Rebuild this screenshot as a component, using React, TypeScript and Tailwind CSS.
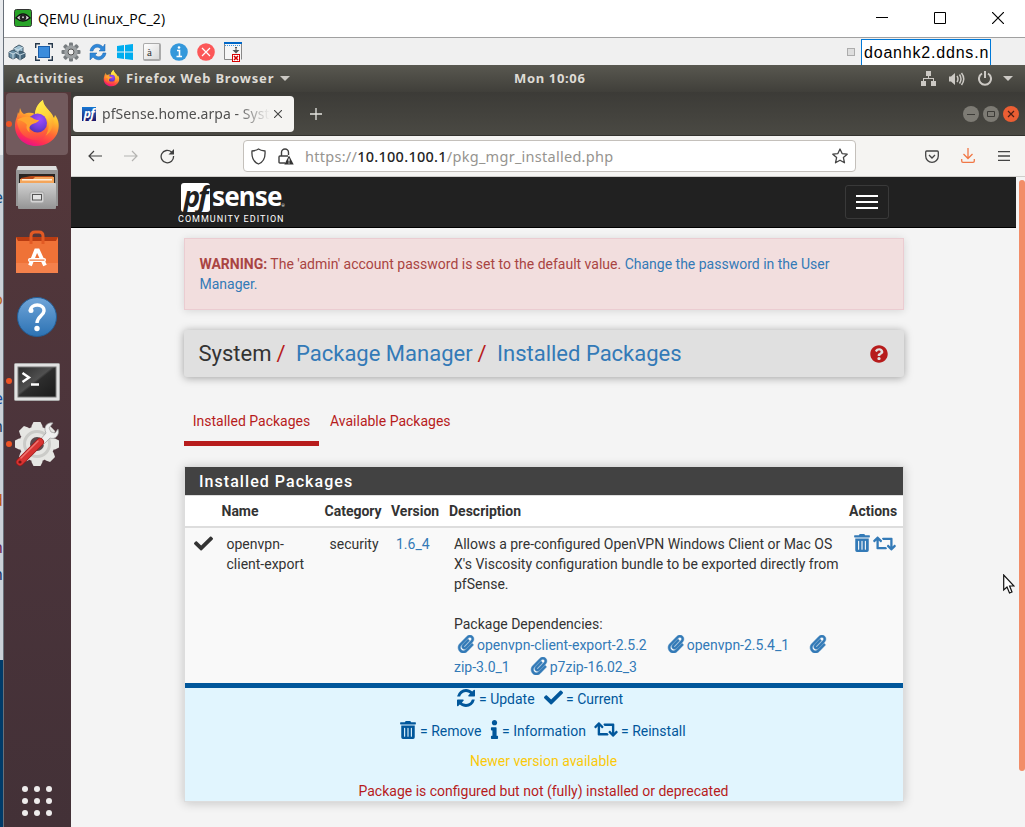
import type { ReactNode } from "react";
import { FaCheck, FaInfo, FaPaperclip, FaQuestionCircle, FaRetweet, FaTrashAlt } from "react-icons/fa";

function Firefox({ className }: { className: string }) {
  return (
    <svg viewBox="0 0 46 48" className={className}>
      <defs>
        <linearGradient id="ffBody" x1="0.75" y1="0" x2="0.35" y2="1">
          <stop offset="0" stopColor="#fff04a" />
          <stop offset="0.35" stopColor="#ffbd2e" />
          <stop offset="0.62" stopColor="#ff6a35" />
          <stop offset="0.85" stopColor="#ff2f52" />
          <stop offset="1" stopColor="#e8118a" />
        </linearGradient>
        <radialGradient id="ffGlobe" cx="0.6" cy="0.3" r="0.8">
          <stop offset="0" stopColor="#a04bff" />
          <stop offset="0.6" stopColor="#6f3ed8" />
          <stop offset="1" stopColor="#4a2fa8" />
        </radialGradient>
        <linearGradient id="ffFlame" x1="0" y1="0" x2="0.4" y2="1">
          <stop offset="0" stopColor="#fff44f" />
          <stop offset="0.6" stopColor="#ffd23a" />
          <stop offset="1" stopColor="#ff9d2f" />
        </linearGradient>
        <linearGradient id="ffCheek" x1="0" y1="0" x2="0" y2="1">
          <stop offset="0" stopColor="#ff9a2c" />
          <stop offset="0.6" stopColor="#ff6535" />
          <stop offset="1" stopColor="#fb3c50" />
        </linearGradient>
      </defs>
      <path d="M6 8C7 11 8 13 10 14C13 13 17 12 21 14C21 9 24 3 29 0C29 5 33 8 37 13C39 15 39 17 40 18L41 15C45 20 46 27 43 34C39 42 31 46 22 46C10 46 1 37 1 26C1 20 3 18 4 12L5 14Z" fill="url(#ffBody)" />
      <path d="M21 14C22 7 25 3 29 0C29 6 36 10 39 17C41 24 37 33 31 36C36 30 36 22 32 18C29 14 25 14 21 14Z" fill="url(#ffFlame)" />
      <path d="M3 21C8 16 16 15 20 19L33 25C35 34 30 40 23 40C11 40 4 32 3 21Z" fill="url(#ffCheek)" />
      <circle cx="23.500" cy="23" r="9.500" fill="url(#ffGlobe)" />
      <path d="M3 20C9 16 17 16 20 19C22 20 24 20 25 20C24 23 20 23 17 25C15 27 14 31 17 33C12 31 12 26 13 25C11 22 7 20 3 20Z" fill="#ffa42f" />
    </svg>
  );
}

function FilesIcon() {
  return (
    <svg viewBox="0 0 44 46" className="h-[46px] w-[44px]">
      <defs>
        <linearGradient id="cab" x1="0" y1="0" x2="0" y2="1">
          <stop offset="0" stopColor="#d0d0d0" />
          <stop offset="1" stopColor="#949494" />
        </linearGradient>
      </defs>
      <path d="M3 1H41L43 5V41H1V5Z" fill="#969696" />
      <path d="M3 1H41L42 5H2Z" fill="#dedede" />
      <rect x="4" y="9" width="36" height="10" fill="#292522" />
      <path d="M6 13L16 11H38V19H6Z" fill="#b94b19" />
      <path d="M5 14H18L20 12H39V19H5Z" fill="#f4a55a" />
      <rect x="7" y="14" width="30" height="1.5" fill="#fff2df" />
      <rect x="3" y="18" width="38" height="26" rx="1" fill="url(#cab)" />
      <rect x="15" y="27" width="14" height="11" rx="2" fill="#d4d4d4" stroke="#a5a5a5" />
      <rect x="17.5" y="29.5" width="9" height="5.5" fill="#e4e4e4" stroke="#555" />
    </svg>
  );
}

function SoftwareIcon() {
  return (
    <svg viewBox="0 0 44 44" className="h-[44px] w-[44px]">
      <path d="M1 7H43V43H1Z" fill="#ef7237" />
      <path d="M1 33H43V43H1Z" fill="#f4814b" />
      <path d="M1 7H43L41 11H3Z" fill="#b93c12" />
      <path d="M16 14V6Q16 2 20 2H24Q28 2 28 6V14" fill="none" stroke="#e25a24" strokeWidth="3" />
      <path d="M15 35.500L21 20.500H23L30 35.500" fill="none" stroke="#fff" strokeWidth="3.800" />
      <rect x="13" y="28" width="18" height="4" rx="2" fill="#fff" />
      <rect x="14.500" y="29.500" width="15" height="1.200" fill="#ef7237" />
    </svg>
  );
}

function HelpIcon() {
  return (
    <svg viewBox="0 0 42 42" className="h-[42px] w-[42px]">
      <defs>
        <linearGradient id="hp" x1="0" y1="0" x2="0" y2="1">
          <stop offset="0" stopColor="#70a5d9" />
          <stop offset="1" stopColor="#2c72b3" />
        </linearGradient>
      </defs>
      <circle cx="21" cy="21" r="19.5" fill="url(#hp)" stroke="#245e96" />
      <path d="M14.500 15C14 7 28.500 7 28 15C27.500 20 21.500 20 21 27" fill="none" stroke="#fff" strokeWidth="3.400" />
      <circle cx="15" cy="14.500" r="2.500" fill="#fff" />
      <circle cx="21" cy="32.500" r="2.700" fill="#fff" />
    </svg>
  );
}

function TerminalIcon() {
  return (
    <svg viewBox="0 0 46 38" className="mt-[1px] h-[38px] w-[46px]">
      <defs>
        <linearGradient id="tm" x1="0" y1="0" x2="1" y2="1">
          <stop offset="0" stopColor="#2b2b2b" />
          <stop offset="0.45" stopColor="#505050" />
          <stop offset="0.5" stopColor="#2d2d2d" />
          <stop offset="1" stopColor="#1b1b1b" />
        </linearGradient>
      </defs>
      <rect x="0.500" y="0.500" width="45" height="37" rx="1" fill="#e2e2e2" stroke="#aaa" />
      <rect x="4" y="4" width="38" height="30" fill="url(#tm)" stroke="#777" />
      <path d="M8.500 10L15 14.500L8.500 19M17 21.500H25" fill="none" stroke="#fff" strokeWidth="2.400" />
    </svg>
  );
}

const dockGearTeeth = [0, 45, 90, 135];

function ToolsIcon() {
  return (
    <svg viewBox="0 0 44 46" className="h-[46px] w-[44px]">
      {dockGearTeeth.map((a) => (
        <path key={a} d="M16.500 5L18.500 1H25.500L27.500 5V41L25.500 45H18.500L16.500 41Z" fill="#e6e6e3" transform={`rotate(${a} 22 23)`} />
      ))}
      <circle cx="22" cy="23" r="17.500" fill="#e6e6e3" />
      <circle cx="22" cy="23" r="12.500" fill="none" stroke="#cbcbc8" strokeWidth="3" />
      <circle cx="22" cy="23" r="7" fill="#5c4a4e" />
      <path d="M24 20L31 12C28 6 32 1 38 2L34 7L36 11L40 12L43 8C45 14 40 19 35 17L28 24Z" fill="#efefef" stroke="#999" strokeWidth="0.700" />
      <path d="M25 21L5 41" stroke="#9f1b1b" strokeWidth="8" strokeLinecap="round" />
      <path d="M25 21L5 41" stroke="#d83432" strokeWidth="6.500" strokeLinecap="round" />
      <path d="M23 20L6 37" stroke="#ef7771" strokeWidth="1.500" strokeLinecap="round" />
      <circle cx="5" cy="41" r="1.600" fill="#6d1717" />
    </svg>
  );
}

function DockItem({ children, running, className }: { children: ReactNode; running?: boolean; className: string }) {
  return (
    <div className={`flex w-full items-center ${className}`}>
      <div className="flex w-[10px] shrink-0 justify-center">
        {running && <span className="-ml-[1px] size-[6px] rounded-full bg-[#ef5425]" />}
      </div>
      <div className="flex w-[46px] shrink-0 items-center justify-center">{children}</div>
    </div>
  );
}

function Dock() {
  return (
    <aside className="flex w-[67px] shrink-0 flex-col bg-linear-to-b from-[#55383a] via-[#4b343b] to-[#433137]">
      <div className="mt-[1px] ml-[2px] flex h-[62px] w-[62px] items-center rounded-[4px] bg-[#725a5d]">
        <span className="size-[6px] shrink-0 rounded-full bg-[#ef5425]" />
        <Firefox className="ml-[2px] h-[48px] w-[46px]" />
      </div>
      <DockItem className="mt-[8px] h-[50px]"><FilesIcon /></DockItem>
      <DockItem className="mt-[14px] h-[50px]"><SoftwareIcon /></DockItem>
      <DockItem className="mt-[15px] h-[50px]"><HelpIcon /></DockItem>
      <DockItem className="mt-[14px] h-[50px]" running><TerminalIcon /></DockItem>
      <DockItem className="mt-[13px] h-[50px]" running><ToolsIcon /></DockItem>
      <div className="mt-auto mb-[11px] ml-[18px] grid w-[30px] grid-cols-3 gap-[6px]">
        {Array.from({ length: 9 }, (_, i) => (
          <span key={i} className="size-[6px] rounded-full bg-[#eeecec]" />
        ))}
      </div>
    </aside>
  );
}

function TitleBar() {
  return (
    <div className="flex h-[38px] shrink-0 items-center border-b border-[#a0a0a0] bg-white pl-[10px]">
      <svg viewBox="0 0 18 18" className="-mt-[1px] size-[18px]">
        <rect x="0.500" y="0.500" width="17" height="17" rx="2" fill="#28a428" stroke="#333" />
        <path d="M2 9Q9 1 16 9Q9 15 2 9Z" fill="#ddd" stroke="#111" strokeWidth="1.400" />
        <circle cx="9" cy="8.500" r="3.300" fill="#222" />
        <circle cx="9" cy="8.300" r="1" fill="#ccc" />
      </svg>
      <span className="-mt-[1px] ml-[6px] font-['Open_Sans',sans-serif] text-[14px] tracking-[0.050px] text-black">QEMU (Linux_PC_2)</span>
      <div className="-mt-[2px] mr-[21px] ml-auto flex items-center gap-[46px] text-black">
        <svg viewBox="0 0 12 12" className="size-[12px]"><path d="M0 5.500H12" stroke="currentColor" /></svg>
        <svg viewBox="0 0 12 12" className="size-[12px]"><path d="M0.500 0.500H11.500V11.500H0.500Z" fill="none" stroke="currentColor" /></svg>
        <svg viewBox="0 0 12 12" className="size-[12px]"><path d="M0 0L12 12M12 0L0 12" stroke="currentColor" strokeWidth="1.200" /></svg>
      </div>
    </div>
  );
}

const gearTeeth = [0, 45, 90, 135];

function ViewerToolbar() {
  return (
    <div className="flex h-[27px] shrink-0 items-center bg-[#f0f0f0] pl-[4px]">
      <div className="flex items-center gap-[9px]">
        <svg viewBox="0 0 18 18" className="size-[18px]" stroke="#334b5b" strokeWidth="0.900">
          <path d="M6 5L11 2L15 4V9L10 11L6 9Z" fill="#9fc0d2" />
          <path d="M1 9L5 7L9 9V14L5 16L1 14Z" fill="#6c91a7" />
          <path d="M8 10L12 8L17 10V14L12 17L8 14Z" fill="#45667c" />
          <path d="M6 5L10 7V11M10 7L15 4M1 9L5 11V16M5 11L9 9M8 10L12 12V17M12 12L17 10" fill="none" stroke="#d3e3eb" />
        </svg>
        <svg viewBox="0 0 18 18" className="size-[18px]">
          <rect x="3.500" y="3.500" width="11" height="11" fill="#3b8cdc" stroke="#1b5da8" />
          <path d="M0.700 5V0.700H5M13 0.700H17.300V5M17.300 13V17.300H13M5 17.300H0.700V13" fill="none" stroke="#26384b" strokeWidth="1.400" />
        </svg>
        <svg viewBox="0 0 20 20" className="-mx-[1px] size-[20px]">
          {gearTeeth.map((a) => <rect key={a} x="8" y="0.500" width="4" height="19" rx="1" fill="#777c7f" transform={`rotate(${a} 10 10)`} />)}
          <circle cx="10" cy="10" r="5" fill="#aaa" stroke="#9da1a3" strokeWidth="3.500" />
          <circle cx="10" cy="10" r="3" fill="#f0f0f0" stroke="#555" />
        </svg>
        <svg viewBox="0 0 18 18" className="size-[18px]">
          <path d="M1 8C2 1 10 -1 14 4L16 1V8H10L12 6C9 3 5 4 4 8ZM17 10C16 17 8 19 4 14L1 17V10H8L6 12C9 15 13 14 14 10Z" fill="#2f87d8" stroke="#1a65af" strokeWidth="0.500" />
        </svg>
        <svg viewBox="0 0 16 16" className="mr-[1px] ml-[1px] size-[16px]" fill="#00adef"><path d="M0 2L7 1V7.500H0ZM8 0.900L16 0V7.500H8ZM0 8.500H7V15L0 14ZM8 8.500H16V16L8 15Z" /></svg>
        <div className="flex size-[18px] rounded-[2px] border border-r-2 border-b-2 border-[#aaa] bg-linear-to-br from-white to-[#d9d9d9] pl-[3px] font-['Liberation_Serif',serif] text-[11px] leading-[16px] text-[#333]">à</div>
        <svg viewBox="0 0 18 18" className="size-[18px]"><circle cx="9" cy="9" r="8.800" fill="#3498db" /><path d="M7 7.500H9.500V13.500M6.500 13.500H12" stroke="#fff" strokeWidth="1.600" fill="none" /><circle cx="9" cy="4.500" r="1.300" fill="#fff" /></svg>
        <svg viewBox="0 0 18 18" className="size-[18px]"><circle cx="9" cy="9" r="8.800" fill="#fc5758" /><path d="M5 5L13 13M13 5L5 13" stroke="#fff" strokeWidth="1.200" /></svg>
        <svg viewBox="0 0 18 20" className="h-[20px] w-[18px]">
          <path d="M0.500 1V17.500H8M17.500 1V17.500" fill="#fff" stroke="#888" />
          <rect x="1" y="2" width="16" height="15" fill="#f6f6f6" />
          <path d="M0 1H18" stroke="#0068c9" strokeWidth="2" />
          <path d="M1 3.500H17" stroke="#3b93e0" strokeDasharray="1 1" />
          <path d="M12 5V10" stroke="#555" strokeWidth="2" strokeDasharray="1.500 1" />
          <path d="M8.500 8H15.500L12 11.500Z" fill="#555" />
          <rect x="8.500" y="12.500" width="7" height="7" fill="#fff" stroke="#d60000" />
          <path d="M10 14L14 18M14 14L10 18" stroke="#d60000" strokeWidth="1.600" />
        </svg>
      </div>
      <div className="mr-[34px] ml-auto flex h-full items-center gap-[6px]">
        <span className="size-[8px] border border-[#acacac] bg-[#dedede]" />
        <div className="mt-[1px] h-[26px] w-[130px] overflow-hidden border border-b-0 border-[#0078d7] bg-white pl-[2px] font-['Liberation_Sans',sans-serif] text-[16px] leading-[25px] tracking-[0.800px] whitespace-nowrap text-black">doanhk2.ddns.n</div>
      </div>
    </div>
  );
}

function TopBar() {
  return (
    <div className="flex h-[27px] shrink-0 items-center bg-linear-to-b from-[#595850] to-[#403f3a] pl-[12px] font-['Noto_Sans',sans-serif] text-[13px] font-bold tracking-[0.800px] text-[#dedbd5]">
      <span className="w-[87px]">Activities</span>
      <Firefox className="-mt-[1px] h-[17px] w-[17px]" />
      <span className="ml-[6px] w-[149px] whitespace-nowrap">Firefox Web Browser</span>
      <svg viewBox="0 0 10 5" className="ml-[5px] h-[5px] w-[10px]"><path d="M0 0H10L5 5Z" fill="#ccc9c4" /></svg>
      <span className="ml-[224px] tracking-[0.650px] whitespace-nowrap">Mon 10:06</span>
      <div className="mr-[12px] ml-auto flex items-center gap-[12px]">
        <svg viewBox="0 0 15 15" className="mr-[1px] size-[15px]" fill="#ccc9c4"><path d="M5 0H10V5H8V7H13V10H15V15H10V10H12V8H3V10H5V15H0V10H2V7H7V5H5Z" /></svg>
        <svg viewBox="0 0 16 14" className="h-[14px] w-[16px]"><path d="M0 4.500H2L6 1V13L2 9.500H0Z" fill="#ccc9c4" /><path d="M8 4Q10 7 8 10M10.500 2.500Q13.500 7 10.500 11.500M12.500 1Q17 7 12.500 13" fill="none" stroke="#ccc9c4" strokeWidth="1.500" /></svg>
        <svg viewBox="0 0 14 15" className="-mt-[1px] ml-[1px] h-[15px] w-[14px]"><path d="M4 2.500A6 6 0 1 0 10 2.500M7 0V7" fill="none" stroke="#ccc9c4" strokeWidth="2" /></svg>
        <svg viewBox="0 0 10 5" className="-ml-[1px] h-[5px] w-[10px]"><path d="M0 0H10L5 5Z" fill="#ccc9c4" /></svg>
      </div>
    </div>
  );
}

function TabStrip() {
  return (
    <div className="flex h-[44px] shrink-0 items-center border-b border-[#33322e] bg-linear-to-b from-[#3c3b37] to-[#4a4943] pl-[2px]">
      <div className="flex h-[36px] w-[221px] items-center rounded-[4px] bg-[#f5f4f2] pl-[9px]">
        <div className="flex size-[14px] items-center justify-center bg-linear-to-b from-[#1278d4] to-[#1d1568] font-['Open_Sans',sans-serif] text-[12px] leading-none font-bold tracking-[-0.500px] text-white italic">pf</div>
        <div className="mt-[1px] ml-[6px] w-[168px] overflow-hidden mask-r-from-80% font-['Noto_Sans',sans-serif] text-[14px] leading-[20px] tracking-[0.050px] whitespace-nowrap text-[#505050]">pfSense.home.arpa - System: Package</div>
        <svg viewBox="0 0 8 8" className="ml-[4px] size-[8px]"><path d="M0 0L8 8M8 0L0 8" stroke="#444" strokeWidth="1.100" /></svg>
      </div>
      <svg viewBox="0 0 12 12" className="ml-[16px] size-[12px]"><path d="M6 0V12M0 6H12" stroke="#e5e5e0" strokeWidth="1.300" /></svg>
      <div className="mr-[6px] ml-auto flex items-center gap-[4px]">
        <svg viewBox="0 0 16 16" className="size-[16px]"><circle cx="8" cy="8" r="8" fill="#7d7b74" /><path d="M4 8.500H12" stroke="#3c3b37" /></svg>
        <svg viewBox="0 0 16 16" className="size-[16px]"><circle cx="8" cy="8" r="8" fill="#7d7b74" /><path d="M4.500 5.500H11.500V10.500H4.500Z" fill="none" stroke="#3c3b37" /></svg>
        <svg viewBox="0 0 16 16" className="size-[16px]"><circle cx="8" cy="8" r="8" fill="#ec5e33" /><path d="M5 5L11 11M11 5L5 11" stroke="#4b2016" strokeWidth="1.200" /></svg>
      </div>
    </div>
  );
}

function NavBar() {
  return (
    <div className="flex h-[41px] shrink-0 items-center border-b border-[#cfcdca] bg-[#f5f4f2] pl-[17px]">
      <svg viewBox="0 0 14 12" className="h-[12px] w-[14px]" fill="none" stroke="#404040" strokeWidth="1.200"><path d="M14 6H1M6 1L1 6L6 11" /></svg>
      <svg viewBox="0 0 14 12" className="ml-[22px] h-[12px] w-[14px]" fill="none" stroke="#b4b3b1" strokeWidth="1.200"><path d="M0 6H13M8 1L13 6L8 11" /></svg>
      <svg viewBox="0 0 15 15" className="ml-[22px] size-[15px]" fill="none" stroke="#404040" strokeWidth="1.300"><path d="M13.500 7A6.200 6.200 0 1 1 11.500 3L13 4.500" /><path d="M14 0V5.500H8.500Z" fill="#404040" stroke="none" /></svg>
      <div className="ml-[68px] flex h-[32px] w-[613px] items-center rounded-[4px] border border-[#c4c0bb] bg-white pl-[7px]">
        <svg viewBox="0 0 15 17" className="h-[17px] w-[15px]" fill="none" stroke="#404040" strokeWidth="1.300"><path d="M7.500 1Q9.500 2.500 14 3C14.500 9 12.500 14 7.500 16C2.500 14 0.500 9 1 3Q5.500 2.500 7.500 1Z" /></svg>
        <svg viewBox="0 0 16 17" className="ml-[12px] h-[17px] w-[16px]"><path d="M3.500 8V4.500A3.500 3.500 0 0 1 10.500 4.500V7M7 15H2Q1 15 1 14V9Q1 8 2 8H10" fill="none" stroke="#404040" strokeWidth="1.400" /><path d="M11 7.500L15.700 16.500H6.300Z" fill="#333" /><path d="M11 10.500V13.500M11 14.500V15.600" stroke="#fff" strokeWidth="1.200" /></svg>
        <span className="mt-[1px] ml-[11px] font-['Noto_Sans',sans-serif] text-[14.500px] tracking-[0.270px] whitespace-nowrap text-[#96948f]">https://<span className="font-medium text-[#252525]">10.100.100.1</span>/pkg_mgr_installed.php</span>
        <svg viewBox="0 0 16 16" className="mr-[7px] ml-auto size-[16px]" fill="none" stroke="#444" strokeWidth="1.300" strokeLinejoin="round"><path d="M8 1L10.100 5.600L15.200 6.200L11.400 9.600L12.500 14.800L8 12.200L3.500 14.800L4.600 9.600L0.800 6.200L5.900 5.600Z" /></svg>
      </div>
      <div className="mr-[15px] ml-auto flex items-center">
        <svg viewBox="0 0 14 13" className="h-[13px] w-[14px]" fill="none" stroke="#444" strokeWidth="1.300"><path d="M1.700 1H12.300Q13.300 1 13.300 2V6A6.300 6.300 0 0 1 0.700 6V2Q0.700 1 1.700 1ZM4 5L7 8L10 5" /></svg>
        <svg viewBox="0 0 14 15" className="-mt-[1px] ml-[22px] h-[15px] w-[14px]" fill="none" stroke="#f07746" strokeWidth="1.300"><path d="M7 0V10M2.500 6L7 10.500L11.500 6M0.700 11V13Q0.700 14.300 2 14.300H12Q13.300 14.300 13.300 13V11" /></svg>
        <svg viewBox="0 0 12 10" className="ml-[23px] h-[10px] w-[12px]"><path d="M0 0.500H12M0 5H12M0 9.500H12" stroke="#444" strokeWidth="1.300" /></svg>
      </div>
    </div>
  );
}

function Dep({ name, className }: { name: string; className: string }) {
  return (
    <span className={`flex items-center ${className}`}>
      <FaPaperclip className="-mt-[2px] size-[18px]" stroke="currentColor" strokeWidth="14" />
      <span className="ml-[2px]">{name}</span>
    </span>
  );
}

function RefreshGlyph() {
  return (
    <svg viewBox="0 0 1536 1536" className="-mt-[2px] size-[18px]" fill="currentColor">
      <path d="M1511 928q0 5-1 7-64 268-268 434.500T764 1536q-146 0-282.500-55T238 1324l-129 129q-19 19-45 19t-45-19-19-45V960q0-26 19-45t45-19h448q26 0 45 19t19 45-19 45l-137 137q71 66 161 102t187 36q134 0 250-65t186-179q11-17 53-117 8-23 30-23h192q13 0 22.500 9.500t9.500 22.500zm25-800v448q0 26-19 45t-45 19h-448q-26 0-45-19t-19-45 19-45l138-138Q969 256 768 256q-134 0-250 65T332 500q-11 17-53 117-8 23-30 23H50q-13 0-22.500-9.500T18 608v-7q65-268 270-434.500T768 0q146 0 284 55.500T1297 212l130-129q19-19 45-19t45 19 19 45z" />
    </svg>
  );
}

function PackagesPanel() {
  const columns = "grid grid-cols-[31.5px_103px_66.500px_58px_400px_59px]";
  return (
    <section className="mt-[20px] h-[336px] w-[720px] border border-[#ddd] bg-white shadow-[0_1px_10px_rgba(0,0,0,0.2)]">
      <h2 className="h-[28px] bg-[#424242] pl-[14px] text-[16px] leading-[29px] font-medium tracking-[1.050px] text-white">Installed Packages</h2>
      <div className={`${columns} h-[33px] border-t border-b-2 border-[#ddd] pt-[5px] pl-0 font-bold`}>
        <span />
        <span className="pl-[5px]">Name</span>
        <span className="pl-[5px]">Category</span>
        <span className="pl-[5px]">Version</span>
        <span className="pl-[5px]">Description</span>
        <span className="pl-[5px]">Actions</span>
      </div>
      <div className={`${columns} h-[155px] bg-[#f9f9f9] pt-[6px]`}>
        <FaCheck className="ml-[9px] size-[19px]" />
        <span className="pl-[10px]">openvpn-<br />client-export</span>
        <span className="pl-[10px]">security</span>
        <span className="pl-[10px] text-[#337ab7]">1.6_4</span>
        <div className="pl-[10px]">
          <p className="whitespace-nowrap">Allows a pre-configured OpenVPN Windows Client or Mac OS<br />X's Viscosity configuration bundle to be exported directly from<br />pfSense.</p>
          <p className="mt-[20px]">Package Dependencies:</p>
          <div className="flex h-[22px] items-center whitespace-nowrap text-[#337ab7]">
            <Dep name="openvpn-client-export-2.5.2" className="ml-[3px]" />
            <Dep name="openvpn-2.5.4_1" className="ml-[20px]" />
            <FaPaperclip className="-mt-[2px] ml-[20px] size-[18px]" stroke="currentColor" strokeWidth="14" />
          </div>
          <div className="flex h-[22px] items-center whitespace-nowrap text-[#337ab7]">
            <span>zip-3.0_1</span>
            <Dep name="p7zip-16.02_3" className="ml-[20px]" />
          </div>
        </div>
        <span className="flex gap-[2px] pl-[9px] text-[#337ab7]">
          <FaTrashAlt className="size-[18px]" />
          <FaRetweet className="h-[19px] w-[23px]" />
        </span>
      </div>
      <div className="flex h-[118px] flex-col border-t-[5px] border-[#01579b] bg-[#e1f5fe] text-[#01579b]">
        <div className="flex h-[21px] items-center pl-[272px] whitespace-nowrap">
          <RefreshGlyph /><span className="ml-[4px] w-[65px]">= Update</span>
          <FaCheck className="-mt-[2px] size-[19px]" /><span className="ml-[3px]">= Current</span>
        </div>
        <div className="mt-[11px] flex h-[21px] items-center pl-[214px] whitespace-nowrap">
          <FaTrashAlt className="-mt-[2px] size-[18px]" /><span className="ml-[3px] w-[65px]">= Remove</span>
          <FaInfo className="-mt-[2px] size-[19px]" /><span className="-ml-[2px] w-[92px]">= Information</span>
          <FaRetweet className="-mt-[2px] h-[19px] w-[24px]" /><span className="ml-[3px]">= Reinstall</span>
        </div>
        <p className="mt-[10px] pr-[1px] text-center text-[#fbc90a]">Newer version available</p>
        <p className="mt-[10px] pr-[1px] text-center text-[#b71c1c]">Package is configured but not (fully) installed or deprecated</p>
      </div>
    </section>
  );
}

function WebPage() {
  return (
    <div className="relative flex flex-1 bg-[#f4f4f4] font-['Roboto',sans-serif] text-[14px] leading-[20px] text-[#333]">
      <div className="w-[945px] shrink-0">
        <header className="flex h-[51px] border-b border-black bg-[#212121]">
          <div className="ml-[107px] w-[140px] pt-[6px] text-white">
            <div className="flex h-[29px] items-center pl-[3px]">
              <div className="flex h-[29px] w-[29px] items-center justify-center rounded-[3px] bg-white font-['Open_Sans',sans-serif] text-[28px] leading-[29px] font-bold tracking-[-2px] text-[#212121] italic"><span className="-ml-[1px] pb-[2px]">pf</span></div>
              <span className="ml-[2px] pb-[2px] font-['Noto_Sans',sans-serif] text-[26px] leading-[29px] font-bold tracking-[-0.900px]">sense</span>
              <span className="mt-[16px] text-[4px]">®</span>
            </div>
            <div className="mt-[1px] text-[9px] leading-[12px] tracking-[1.020px] whitespace-nowrap">COMMUNITY EDITION</div>
          </div>
          <div className="mt-[8px] mr-[127px] ml-auto flex h-[34px] w-[44px] flex-col items-center justify-center gap-[4px] rounded-[3px] border border-[#393939]">
            <span className="h-[2px] w-[22px] bg-white" />
            <span className="h-[2px] w-[22px] bg-white" />
            <span className="h-[2px] w-[22px] bg-white" />
          </div>
        </header>
        <main className="ml-[113px] w-[720px] pt-[10px]">
          <div className="h-[72px] border border-[#ebccd1] bg-[#f2dede] py-[15px] pr-[15px] pl-[14.500px] whitespace-nowrap text-[#a94442] shadow-[0_1px_8px_rgba(0,0,0,0.12)]">
            <b>WARNING:</b> The 'admin' account password is set to the default value. <span className="text-[#337ab7]">Change the password in the User<br />Manager.</span>
          </div>
          <div className="mt-[20px] flex h-[47px] items-center rounded-[3px] bg-[#e0e0e0] pr-[16px] pl-[14.500px] text-[22px] whitespace-nowrap shadow-[0_1px_8px_rgba(0,0,0,0.35)]">
            <span className="w-[78px]">System</span><span className="w-[19.500px] text-[#b71c1c]">/</span>
            <span className="w-[181.500px] text-[#337ab7]">Package Manager</span><span className="w-[19.500px] text-[#b71c1c]">/</span>
            <span className="text-[#337ab7]">Installed Packages</span>
            <FaQuestionCircle className="ml-auto size-[18px] text-[#b71c1c]" />
          </div>
          <nav className="mt-[21px] flex h-[48px] text-[#b71c1c]">
            <div className="w-[135px] border-b-[5px] border-[#b71c1c] pt-[13px] text-center">Installed Packages</div>
            <div className="pt-[13px] pl-[11px]">Available Packages</div>
          </nav>
          <PackagesPanel />
        </main>
      </div>
      <div className="mt-[3px] ml-auto h-[591px] w-[6px] rounded-[3px] bg-[#f28d68]" />
      <svg viewBox="0 0 12 20" className="absolute top-[397px] left-[932px] h-[20px] w-[12px]"><path d="M0.700 1V16L4 13L6.500 19L9 18L6.600 12H11Z" fill="#fff" stroke="#111" strokeWidth="1.200" /></svg>
    </div>
  );
}

const slivers = [
  { text: "e", className: "top-[187px] text-[#174a7c]" },
  { text: "o", className: "top-[289px] text-[#bd641e]" },
  { text: "e", className: "top-[388px] text-[#174a9c]" },
  { text: "m", className: "top-[416px] text-[#263c58]" },
  { text: "d", className: "top-[490px] text-[#bd5410]" },
  { text: "n", className: "top-[537px] text-[#6a2552]" },
  { text: "h", className: "top-[564px] text-[#183468]" },
];

export default function App() {
  return (
    <div className="flex h-[827px] w-[1025px] overflow-hidden">
      <div className="relative flex w-[4px] shrink-0 flex-col overflow-hidden border-r border-[#687079]">
        <div className="h-[155px] bg-[#e9ebee]" />
        <div className="h-[505px] bg-[#cbd1d8]" />
        <div className="flex-1 bg-[#003b69]" />
        {slivers.map((s) => (
          <span key={s.className} className={`absolute right-0 font-['Open_Sans',sans-serif] text-[17px] leading-[20px] ${s.className}`}>{s.text}</span>
        ))}
      </div>
      <div className="flex w-[1021px] shrink-0 flex-col">
        <TitleBar />
        <ViewerToolbar />
        <TopBar />
        <div className="flex min-h-0 flex-1">
          <Dock />
          <div className="flex min-w-0 flex-1 flex-col">
            <TabStrip />
            <NavBar />
            <WebPage />
          </div>
        </div>
      </div>
    </div>
  );
}
